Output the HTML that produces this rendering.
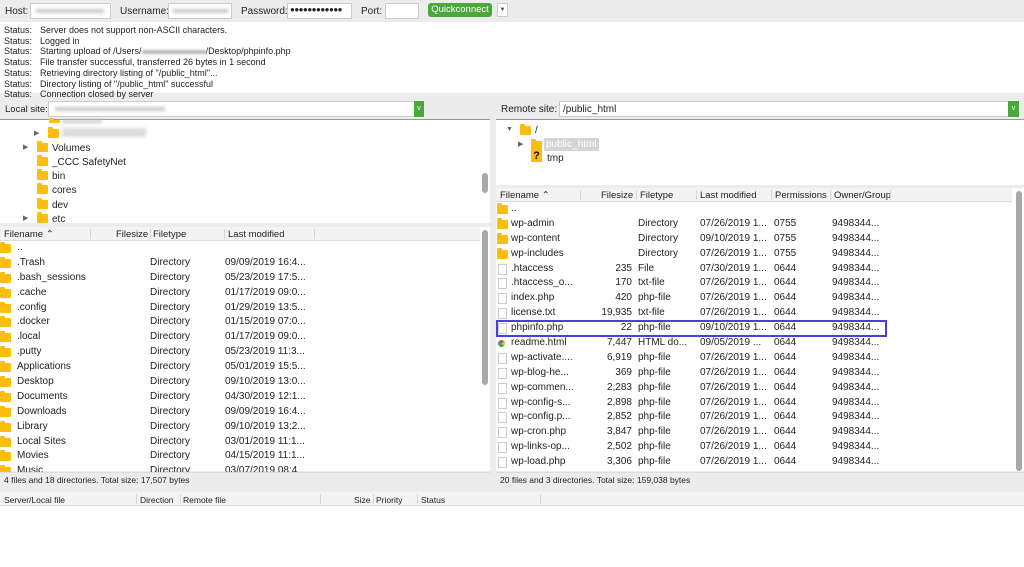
<!DOCTYPE html>
<html><head><meta charset="utf-8">
<style>
*{margin:0;padding:0;box-sizing:border-box}
body{width:1024px;height:567px;overflow:hidden;background:#ececec;font-family:"Liberation Sans",sans-serif;font-size:10px;color:#222;position:relative}
.a{position:absolute;white-space:nowrap}
.box{position:absolute;background:#fff}
.blur{position:absolute;background:#c8c8c8;filter:blur(1.5px)}
.fold{position:absolute;width:11px;height:9px;background:#fdbd0e;border-radius:1px}
.fold:before{content:"";position:absolute;left:0;top:-2px;width:5px;height:3px;background:#fdbd0e;border-radius:1px 1px 0 0}
.file{position:absolute;width:9px;height:11px;border:1px solid #ccc;background:#fff}
.hdr{position:absolute;background:#f3f3f3;border-bottom:1px solid #ddd;height:14px}
.sep{position:absolute;top:2px;width:1px;height:10px;background:#d4d4d4}
.tri{position:absolute;font-size:7px;color:#666}
.sb{position:absolute;background:#a9a9a9;border-radius:3px;width:6px}
</style></head><body>
<!-- toolbar -->
<div class="a" style="left:5px;top:6px">Host:</div>
<div class="box" style="left:30px;top:3px;width:81px;height:16px;border:1px solid #ccc"></div>
<div class="blur" style="left:36px;top:9px;width:68px;height:4px"></div>
<div class="a" style="left:120px;top:6px">Username:</div>
<div class="box" style="left:168px;top:3px;width:64px;height:16px;border:1px solid #ccc"></div>
<div class="blur" style="left:173px;top:9px;width:55px;height:4px"></div>
<div class="a" style="left:241px;top:6px">Password:</div>
<div class="box" style="left:287px;top:3px;width:65px;height:16px;border:1px solid #ccc"></div>
<div class="a" style="left:290px;top:5px;font-size:8px;letter-spacing:-0.5px">●●●●●●●●●●●●</div>
<div class="a" style="left:361px;top:6px">Port:</div>
<div class="box" style="left:385px;top:3px;width:34px;height:16px;border:1px solid #ccc"></div>
<div class="a" style="left:428px;top:3px;width:64px;height:14px;background:#4ca83c;border-radius:3px;color:#fff;text-align:center;line-height:14px;font-size:9.5px">Quickconnect</div>
<div class="box" style="left:497px;top:3px;width:11px;height:14px;border:1px solid #ccc;font-size:6px;text-align:center;line-height:12px;color:#444">▼</div>
<!-- log -->
<div class="box" style="left:0;top:22px;width:1024px;height:71px;line-height:10.7px;padding:3px 4px;font-size:9px">
<div><span style="display:inline-block;width:36px">Status:</span>Server does not support non-ASCII characters.</div>
<div><span style="display:inline-block;width:36px">Status:</span>Logged in</div>
<div><span style="display:inline-block;width:36px">Status:</span>Starting upload of /Users/<span style="display:inline-block;width:64px;height:4px;background:#bbb;filter:blur(1px);vertical-align:middle"></span>/Desktop/phpinfo.php</div>
<div><span style="display:inline-block;width:36px">Status:</span>File transfer successful, transferred 26 bytes in 1 second</div>
<div><span style="display:inline-block;width:36px">Status:</span>Retrieving directory listing of "/public_html"...</div>
<div><span style="display:inline-block;width:36px">Status:</span>Directory listing of "/public_html" successful</div>
<div><span style="display:inline-block;width:36px">Status:</span>Connection closed by server</div>
</div>
<!-- local site bar -->
<div class="a" style="left:5px;top:104px;font-size:9.5px">Local site:</div>
<div class="box" style="left:48px;top:101px;width:376px;height:16px;border:1px solid #ccc"></div>
<div class="blur" style="left:55px;top:107px;width:110px;height:4px"></div>
<div class="a" style="left:414px;top:101px;width:10px;height:16px;background:#4ca83c;color:#fff;font-size:7px;text-align:center;line-height:16px">v</div>
<!-- remote site bar -->
<div class="a" style="left:501px;top:104px">Remote site:</div>
<div class="box" style="left:559px;top:101px;width:460px;height:16px;border:1px solid #ccc"></div>
<div class="a" style="left:563px;top:104px">/public_html</div>
<div class="a" style="left:1008px;top:101px;width:11px;height:16px;background:#4ca83c;color:#fff;font-size:7px;text-align:center;line-height:16px">v</div>
<!-- local tree -->
<div class="box" style="left:0;top:120px;width:490px;height:103px"></div>
<div class="box" style="left:0;top:119px;width:490px;height:1px;background:#999"></div>
<div class="fold" style="left:49px;top:120px;height:3px"></div>
<div class="blur" style="left:62px;top:120px;width:40px;height:3px"></div>
<div class="tri" style="left:34px;top:129px">▶</div><div class="fold" style="left:48px;top:129px"></div>
<div class="blur" style="left:62px;top:128px;width:84px;height:9px;background:#ddd"></div>
<div class="tri" style="left:23px;top:143px">▶</div><div class="fold" style="left:37px;top:143px"></div><div class="a" style="left:52px;top:143px">Volumes</div>
<div class="fold" style="left:37px;top:157px"></div><div class="a" style="left:52px;top:157px">_CCC SafetyNet</div>
<div class="fold" style="left:37px;top:171px"></div><div class="a" style="left:52px;top:171px">bin</div>
<div class="fold" style="left:37px;top:185px"></div><div class="a" style="left:52px;top:185px">cores</div>
<div class="fold" style="left:37px;top:200px"></div><div class="a" style="left:52px;top:200px">dev</div>
<div class="tri" style="left:23px;top:214px">▶</div><div class="fold" style="left:37px;top:214px"></div><div class="a" style="left:52px;top:214px">etc</div>
<div class="sb" style="left:482px;top:173px;height:20px"></div>
<!-- remote tree -->
<div class="box" style="left:496px;top:120px;width:528px;height:65px"></div>
<div class="box" style="left:496px;top:119px;width:528px;height:1px;background:#999"></div>
<div class="tri" style="left:506px;top:126px">▼</div><div class="fold" style="left:520px;top:126px"></div><div class="a" style="left:535px;top:125px">/</div>
<div class="tri" style="left:518px;top:140px">▶</div><div class="fold" style="left:531px;top:141px"></div>
<div class="a" style="left:544px;top:138px;background:#d4d4d4;color:#fff;padding:1px 2px">public_html</div>
<div class="a" style="left:531px;top:150px;width:11px;height:12px;background:#fdbd0e;font-weight:bold;font-size:11px;text-align:center;line-height:12px;color:#111">?</div>
<div class="a" style="left:547px;top:153px">tmp</div>
<!-- left list -->
<div class="box" style="left:0;top:227px;width:490px;height:244px"></div>
<div class="hdr" style="left:0;top:227px;width:480px"></div>
<div class="a" style="left:4px;top:229px;font-size:9.5px">Filename ⌃</div>
<div class="sep" style="left:90px;top:229px"></div>
<div class="a" style="left:116px;top:229px;font-size:9.5px">Filesize</div>
<div class="sep" style="left:150px;top:229px"></div>
<div class="a" style="left:153px;top:229px;font-size:9.5px">Filetype</div>
<div class="sep" style="left:224px;top:229px"></div>
<div class="a" style="left:228px;top:229px;font-size:9.5px">Last modified</div>
<div class="sep" style="left:314px;top:229px"></div>
<div class="sb" style="left:482px;top:230px;height:155px"></div>
<div class="a" style="left:0;top:241px;width:480px;height:231px;overflow:hidden">
<div style="position:relative;line-height:14.9px;font-size:10px">
<div style="height:14.9px;position:relative"><span class="fold" style="left:0;top:3px"></span><span class="a" style="left:17px">..</span></div>
<div style="height:14.9px;position:relative"><span class="fold" style="left:0;top:3px"></span><span class="a" style="left:17px">.Trash</span><span class="a" style="left:150px">Directory</span><span class="a" style="left:225px">09/09/2019 16:4...</span></div>
<div style="height:14.9px;position:relative"><span class="fold" style="left:0;top:3px"></span><span class="a" style="left:17px">.bash_sessions</span><span class="a" style="left:150px">Directory</span><span class="a" style="left:225px">05/23/2019 17:5...</span></div>
<div style="height:14.9px;position:relative"><span class="fold" style="left:0;top:3px"></span><span class="a" style="left:17px">.cache</span><span class="a" style="left:150px">Directory</span><span class="a" style="left:225px">01/17/2019 09:0...</span></div>
<div style="height:14.9px;position:relative"><span class="fold" style="left:0;top:3px"></span><span class="a" style="left:17px">.config</span><span class="a" style="left:150px">Directory</span><span class="a" style="left:225px">01/29/2019 13:5...</span></div>
<div style="height:14.9px;position:relative"><span class="fold" style="left:0;top:3px"></span><span class="a" style="left:17px">.docker</span><span class="a" style="left:150px">Directory</span><span class="a" style="left:225px">01/15/2019 07:0...</span></div>
<div style="height:14.9px;position:relative"><span class="fold" style="left:0;top:3px"></span><span class="a" style="left:17px">.local</span><span class="a" style="left:150px">Directory</span><span class="a" style="left:225px">01/17/2019 09:0...</span></div>
<div style="height:14.9px;position:relative"><span class="fold" style="left:0;top:3px"></span><span class="a" style="left:17px">.putty</span><span class="a" style="left:150px">Directory</span><span class="a" style="left:225px">05/23/2019 11:3...</span></div>
<div style="height:14.9px;position:relative"><span class="fold" style="left:0;top:3px"></span><span class="a" style="left:17px">Applications</span><span class="a" style="left:150px">Directory</span><span class="a" style="left:225px">05/01/2019 15:5...</span></div>
<div style="height:14.9px;position:relative"><span class="fold" style="left:0;top:3px"></span><span class="a" style="left:17px">Desktop</span><span class="a" style="left:150px">Directory</span><span class="a" style="left:225px">09/10/2019 13:0...</span></div>
<div style="height:14.9px;position:relative"><span class="fold" style="left:0;top:3px"></span><span class="a" style="left:17px">Documents</span><span class="a" style="left:150px">Directory</span><span class="a" style="left:225px">04/30/2019 12:1...</span></div>
<div style="height:14.9px;position:relative"><span class="fold" style="left:0;top:3px"></span><span class="a" style="left:17px">Downloads</span><span class="a" style="left:150px">Directory</span><span class="a" style="left:225px">09/09/2019 16:4...</span></div>
<div style="height:14.9px;position:relative"><span class="fold" style="left:0;top:3px"></span><span class="a" style="left:17px">Library</span><span class="a" style="left:150px">Directory</span><span class="a" style="left:225px">09/10/2019 13:2...</span></div>
<div style="height:14.9px;position:relative"><span class="fold" style="left:0;top:3px"></span><span class="a" style="left:17px">Local Sites</span><span class="a" style="left:150px">Directory</span><span class="a" style="left:225px">03/01/2019 11:1...</span></div>
<div style="height:14.9px;position:relative"><span class="fold" style="left:0;top:3px"></span><span class="a" style="left:17px">Movies</span><span class="a" style="left:150px">Directory</span><span class="a" style="left:225px">04/15/2019 11:1...</span></div>
<div style="height:14.9px;position:relative"><span class="fold" style="left:0;top:3px"></span><span class="a" style="left:17px">Music</span><span class="a" style="left:150px">Directory</span><span class="a" style="left:225px">03/07/2019 08:4...</span></div>
</div></div>
<div class="a" style="left:0;top:472px;width:490px;height:14px;background:#ececec;border-top:1px solid #ddd;font-size:8.5px;padding:2px 4px">4 files and 18 directories. Total size: 17,507 bytes</div>
<!-- remote list -->
<div class="box" style="left:496px;top:188px;width:528px;height:283px"></div>
<div class="hdr" style="left:496px;top:188px;width:516px"></div>
<div class="a" style="left:500px;top:190px;font-size:9.5px">Filename ⌃</div>
<div class="sep" style="left:580px;top:190px"></div>
<div class="a" style="left:601px;top:190px;font-size:9.5px">Filesize</div>
<div class="sep" style="left:636px;top:190px"></div>
<div class="a" style="left:640px;top:190px;font-size:9.5px">Filetype</div>
<div class="sep" style="left:696px;top:190px"></div>
<div class="a" style="left:700px;top:190px;font-size:9.5px">Last modified</div>
<div class="sep" style="left:771px;top:190px"></div>
<div class="a" style="left:775px;top:190px;font-size:9.5px">Permissions</div>
<div class="sep" style="left:830px;top:190px"></div>
<div class="a" style="left:834px;top:190px;font-size:9.5px">Owner/Group</div>
<div class="sep" style="left:890px;top:190px"></div>
<div class="sb" style="left:1016px;top:191px;height:280px"></div>
<div class="a" style="left:496px;top:202px;width:518px;height:270px;overflow:hidden">
<div style="position:relative;line-height:14.9px;font-size:10px">
<div style="height:14.9px;position:relative"><span class="fold" style="left:1px;top:3px"></span><span class="a" style="left:15px">..</span></div>
<div style="height:14.9px;position:relative"><span class="fold" style="left:1px;top:3px"></span><span class="a" style="left:15px">wp-admin</span><span class="a" style="left:142px">Directory</span><span class="a" style="left:204px">07/26/2019 1...</span><span class="a" style="left:278px">0755</span><span class="a" style="left:336px">9498344...</span></div>
<div style="height:14.9px;position:relative"><span class="fold" style="left:1px;top:3px"></span><span class="a" style="left:15px">wp-content</span><span class="a" style="left:142px">Directory</span><span class="a" style="left:204px">09/10/2019 1...</span><span class="a" style="left:278px">0755</span><span class="a" style="left:336px">9498344...</span></div>
<div style="height:14.9px;position:relative"><span class="fold" style="left:1px;top:3px"></span><span class="a" style="left:15px">wp-includes</span><span class="a" style="left:142px">Directory</span><span class="a" style="left:204px">07/26/2019 1...</span><span class="a" style="left:278px">0755</span><span class="a" style="left:336px">9498344...</span></div>
<div style="height:14.9px;position:relative"><span class="file" style="left:2px;top:2px"></span><span class="a" style="left:15px">.htaccess</span><span class="a" style="left:100px;width:36px;text-align:right">235</span><span class="a" style="left:142px">File</span><span class="a" style="left:204px">07/30/2019 1...</span><span class="a" style="left:278px">0644</span><span class="a" style="left:336px">9498344...</span></div>
<div style="height:14.9px;position:relative"><span class="file" style="left:2px;top:2px"></span><span class="a" style="left:15px">.htaccess_o...</span><span class="a" style="left:100px;width:36px;text-align:right">170</span><span class="a" style="left:142px">txt-file</span><span class="a" style="left:204px">07/26/2019 1...</span><span class="a" style="left:278px">0644</span><span class="a" style="left:336px">9498344...</span></div>
<div style="height:14.9px;position:relative"><span class="file" style="left:2px;top:2px"></span><span class="a" style="left:15px">index.php</span><span class="a" style="left:100px;width:36px;text-align:right">420</span><span class="a" style="left:142px">php-file</span><span class="a" style="left:204px">07/26/2019 1...</span><span class="a" style="left:278px">0644</span><span class="a" style="left:336px">9498344...</span></div>
<div style="height:14.9px;position:relative"><span class="file" style="left:2px;top:2px"></span><span class="a" style="left:15px">license.txt</span><span class="a" style="left:100px;width:36px;text-align:right">19,935</span><span class="a" style="left:142px">txt-file</span><span class="a" style="left:204px">07/26/2019 1...</span><span class="a" style="left:278px">0644</span><span class="a" style="left:336px">9498344...</span></div>
<div style="height:14.9px;position:relative"><span class="file" style="left:2px;top:2px"></span><span class="a" style="left:15px">phpinfo.php</span><span class="a" style="left:100px;width:36px;text-align:right">22</span><span class="a" style="left:142px">php-file</span><span class="a" style="left:204px">09/10/2019 1...</span><span class="a" style="left:278px">0644</span><span class="a" style="left:336px">9498344...</span></div>
<div style="height:14.9px;position:relative"><span class="a" style="left:2px;top:4px;width:7px;height:7px;border-radius:50%;background:conic-gradient(#e33,#fc3,#3a3,#39f,#e33)"></span><span class="a" style="left:15px">readme.html</span><span class="a" style="left:100px;width:36px;text-align:right">7,447</span><span class="a" style="left:142px">HTML do...</span><span class="a" style="left:204px">09/05/2019 ...</span><span class="a" style="left:278px">0644</span><span class="a" style="left:336px">9498344...</span></div>
<div style="height:14.9px;position:relative"><span class="file" style="left:2px;top:2px"></span><span class="a" style="left:15px">wp-activate....</span><span class="a" style="left:100px;width:36px;text-align:right">6,919</span><span class="a" style="left:142px">php-file</span><span class="a" style="left:204px">07/26/2019 1...</span><span class="a" style="left:278px">0644</span><span class="a" style="left:336px">9498344...</span></div>
<div style="height:14.9px;position:relative"><span class="file" style="left:2px;top:2px"></span><span class="a" style="left:15px">wp-blog-he...</span><span class="a" style="left:100px;width:36px;text-align:right">369</span><span class="a" style="left:142px">php-file</span><span class="a" style="left:204px">07/26/2019 1...</span><span class="a" style="left:278px">0644</span><span class="a" style="left:336px">9498344...</span></div>
<div style="height:14.9px;position:relative"><span class="file" style="left:2px;top:2px"></span><span class="a" style="left:15px">wp-commen...</span><span class="a" style="left:100px;width:36px;text-align:right">2,283</span><span class="a" style="left:142px">php-file</span><span class="a" style="left:204px">07/26/2019 1...</span><span class="a" style="left:278px">0644</span><span class="a" style="left:336px">9498344...</span></div>
<div style="height:14.9px;position:relative"><span class="file" style="left:2px;top:2px"></span><span class="a" style="left:15px">wp-config-s...</span><span class="a" style="left:100px;width:36px;text-align:right">2,898</span><span class="a" style="left:142px">php-file</span><span class="a" style="left:204px">07/26/2019 1...</span><span class="a" style="left:278px">0644</span><span class="a" style="left:336px">9498344...</span></div>
<div style="height:14.9px;position:relative"><span class="file" style="left:2px;top:2px"></span><span class="a" style="left:15px">wp-config.p...</span><span class="a" style="left:100px;width:36px;text-align:right">2,852</span><span class="a" style="left:142px">php-file</span><span class="a" style="left:204px">07/26/2019 1...</span><span class="a" style="left:278px">0644</span><span class="a" style="left:336px">9498344...</span></div>
<div style="height:14.9px;position:relative"><span class="file" style="left:2px;top:2px"></span><span class="a" style="left:15px">wp-cron.php</span><span class="a" style="left:100px;width:36px;text-align:right">3,847</span><span class="a" style="left:142px">php-file</span><span class="a" style="left:204px">07/26/2019 1...</span><span class="a" style="left:278px">0644</span><span class="a" style="left:336px">9498344...</span></div>
<div style="height:14.9px;position:relative"><span class="file" style="left:2px;top:2px"></span><span class="a" style="left:15px">wp-links-op...</span><span class="a" style="left:100px;width:36px;text-align:right">2,502</span><span class="a" style="left:142px">php-file</span><span class="a" style="left:204px">07/26/2019 1...</span><span class="a" style="left:278px">0644</span><span class="a" style="left:336px">9498344...</span></div>
<div style="height:14.9px;position:relative"><span class="file" style="left:2px;top:2px"></span><span class="a" style="left:15px">wp-load.php</span><span class="a" style="left:100px;width:36px;text-align:right">3,306</span><span class="a" style="left:142px">php-file</span><span class="a" style="left:204px">07/26/2019 1...</span><span class="a" style="left:278px">0644</span><span class="a" style="left:336px">9498344...</span></div>
</div></div>
<div class="a" style="left:496px;top:320px;width:391px;height:17px;border:2px solid #4b3ee0"></div>
<div class="a" style="left:496px;top:472px;width:528px;height:14px;background:#ececec;border-top:1px solid #ddd;font-size:8.5px;padding:2px 4px">20 files and 3 directories. Total size: 159,038 bytes</div>
<!-- queue -->
<div class="box" style="left:0;top:492px;width:1024px;height:75px"></div>
<div class="hdr" style="left:0;top:492px;width:1024px;height:14px"></div>
<div class="a" style="left:4px;top:495px;font-size:8.5px">Server/Local file</div>
<div class="sep" style="left:136px;top:494px"></div>
<div class="a" style="left:140px;top:495px;font-size:8.5px">Direction</div>
<div class="sep" style="left:180px;top:494px"></div>
<div class="a" style="left:183px;top:495px;font-size:8.5px">Remote file</div>
<div class="sep" style="left:320px;top:494px"></div>
<div class="a" style="left:354px;top:495px;font-size:8.5px">Size</div>
<div class="sep" style="left:373px;top:494px"></div>
<div class="a" style="left:376px;top:495px;font-size:8.5px">Priority</div>
<div class="sep" style="left:417px;top:494px"></div>
<div class="a" style="left:421px;top:495px;font-size:8.5px">Status</div>
<div class="sep" style="left:540px;top:494px"></div>
</body></html>
